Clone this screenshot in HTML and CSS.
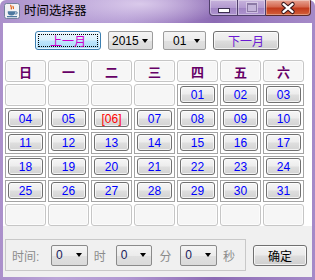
FILE: index.html
```html
<!DOCTYPE html>
<html lang="zh">
<head>
    <meta charset="UTF-8">
    <title>时间选择器</title>
    <link rel="stylesheet" href="styles.css">
</head>
<body>
    <div class="window">
        <div class="titlebar">
            <svg class="app-icon" viewBox="0 0 16 16">
                <rect x="0.5" y="0.5" width="15" height="15" rx="2" fill="#f2f2f4" stroke="#73819c"/>
                <path d="M7 1.8c-1.2 1.6 1.6 2.6 0 4.6M9.2 2.8c-.9 1 1.1 1.8 0 3.2" stroke="#e25d10" fill="none" stroke-width="1.2"/>
                <path d="M3.8 8.2h7.4v1.6c0 1.7-1.5 2.6-3.7 2.6S3.8 11.5 3.8 9.8z" fill="#4f7aa0"/>
                <path d="M11.2 8.8h.9a1.1 1.1 0 0 1 0 2.2h-1" stroke="#4f7aa0" fill="none"/>
                <path d="M3 13.6h10" stroke="#4f7aa0" stroke-width="1.2"/>
            </svg>
            <span class="title">时间选择器</span>
            <div class="caption-btns">
                <div class="cap min"><span></span></div>
                <div class="cap max"><span></span></div>
                <div class="cap close">
                    <svg viewBox="-22 -8 44 16" width="44" height="16">
                        <path d="M-4.5 -3.8L4.5 3.8M4.5 -3.8L-4.5 3.8" stroke="#3b1a1e" stroke-width="4.4" stroke-linecap="round"/>
                        <path d="M-4.5 -3.8L4.5 3.8M4.5 -3.8L-4.5 3.8" stroke="#fff" stroke-width="2.4" stroke-linecap="round"/>
                    </svg>
                </div>
            </div>
        </div>

        <div class="client">
            <div class="nav">
                <button class="btn focus prev"><span>上一月</span></button>
                <div class="combo year">2015<i class="arrow"></i></div>
                <div class="combo month">01<i class="arrow"></i></div>
                <button class="btn next">下一月</button>
            </div>

            <div class="grid" id="grid"></div>

            <div class="footer">
                <div class="time-panel">
                    <span class="label">时间:</span>
                    <div class="combo small">0<i class="arrow"></i></div>
                    <span class="unit u1">时</span>
                    <div class="combo small">0<i class="arrow"></i></div>
                    <span class="unit u2">分</span>
                    <div class="combo small">0<i class="arrow"></i></div>
                    <span class="unit u3">秒</span>
                </div>
                <button class="btn ok">确定</button>
            </div>
        </div>
    </div>

    <script>
        const heads = ['日', '一', '二', '三', '四', '五', '六'];
        const year = 2015, month = 0, today = 6;
        const grid = document.getElementById('grid');

        heads.forEach(h => {
            const div = document.createElement('div');
            div.className = 'cell head';
            div.textContent = h;
            grid.appendChild(div);
        });

        const start = new Date(year, month, 1).getDay();
        const days = new Date(year, month + 1, 0).getDate();

        for (let i = 0; i < 42; i++) {
            const d = i - start + 1;
            const div = document.createElement('div');
            if (d < 1 || d > days) {
                div.className = 'cell';
            } else {
                const label = String(d).padStart(2, '0');
                div.className = d === today ? 'cell day today' : 'cell day';
                div.innerHTML = `<span>${d === today ? '[' + label + ']' : label}</span>`;
            }
            grid.appendChild(div);
        }
    </script>
</body>
</html>
```

FILE: styles.css
```css
body {
    margin: 0;
    font-family: "Liberation Sans", "Noto Sans CJK SC", sans-serif;
    font-size: 12px;
}
.window {
    width: 315px;
    height: 280px;
    display: flex;
    flex-direction: column;
    border-radius: 6px 6px 0 0;
    overflow: hidden;
    background:
        radial-gradient(ellipse 90px 22px at 140px 4px, rgba(226, 212, 240, 0.85), transparent),
        linear-gradient(90deg, #ab90cb 0%, #bba5d8 18%, #b198d2 40%, #9a7bbf 58%, #8c6bb4 68%, #9b7dc0 85%, #a58ac8 100%);
}
.titlebar {
    height: 23px;
    display: flex;
    align-items: flex-start;
    flex-shrink: 0;
}
.app-icon {
    width: 16px;
    height: 16px;
    margin: 3px 0 0 4px;
}
.title {
    margin: 3px 0 0 4px;
    font-size: 12.5px;
    line-height: 17px;
    color: #000;
}
.caption-btns {
    margin-left: auto;
    margin-right: 4px;
    display: flex;
    height: 16px;
}
.cap {
    box-sizing: border-box;
    height: 16px;
    border: 1px solid #4f3f6a;
    border-top: none;
    display: flex;
    align-items: center;
    justify-content: center;
    background: linear-gradient(#c7b3dc, #b39ad0 50%, #9f83c2 51%, #ad93ce);
    box-shadow: inset 0 0 0 1px rgba(255, 255, 255, 0.35);
}
.min {
    width: 29px;
    border-radius: 0 0 0 4px;
}
.min span {
    width: 10px;
    height: 3px;
    margin-top: 5px;
    background: #fff;
    border: 1px solid #3c3050;
}
.max {
    width: 28px;
    border-left: none;
}
.max span {
    width: 8px;
    height: 6px;
    border: 1px solid #8c7aa6;
    border-top-width: 2px;
    background: #c4b4da;
    box-shadow: 0 0 0 1px rgba(230, 220, 240, 0.6);
}
.close {
    width: 45px;
    border-left: none;
    border-radius: 0 0 4px 0;
    border-color: #5a2a2a;
    background: linear-gradient(#e7a595, #d5684f 45%, #c23a1c 55%, #d2603a);
}
.client {
    flex: 1;
    margin: 0 3px 3px 3px;
    background: #fff;
    display: flex;
    flex-direction: column;
}
.nav {
    display: flex;
    padding: 8px 0 0 32px;
    height: 19px;
}
.btn {
    box-sizing: border-box;
    height: 19px;
    padding: 0;
    border: 1px solid #707070;
    border-radius: 3px;
    font-family: "Liberation Sans", "Noto Sans CJK SC", sans-serif;
    font-size: 12px;
    background: linear-gradient(#f3f3f3, #ebebeb 48%, #dddddd 52%, #cfcfcf);
    box-shadow: inset 0 0 0 1px rgba(255, 255, 255, 0.7);
}
.prev {
    width: 66px;
    color: #cc00cc;
    border-color: #3c7fb1;
    background: linear-gradient(#eaf6fd, #d9f0fc 48%, #bee6fd 52%, #a7d9f5);
    display: flex;
    padding: 2px;
}
.prev span {
    flex: 1;
    border: 1px dotted #000;
    display: flex;
    align-items: center;
    justify-content: center;
}
.next {
    width: 66px;
    margin-left: 7px;
    color: #6a1ad2;
}
.combo {
    box-sizing: border-box;
    height: 19px;
    display: flex;
    align-items: center;
    border: 1px solid #9c9c9c;
    border-radius: 2px;
    background: linear-gradient(#f4f4f4, #ececec 50%, #e0e0e0 51%, #dadada);
    color: #000;
}
.arrow {
    margin-left: auto;
    width: 0;
    height: 0;
    border-left: 3.5px solid transparent;
    border-right: 3.5px solid transparent;
    border-top: 4px solid #000;
}
.year {
    width: 45px;
    margin-left: 7px;
    padding: 0 4px 0 3px;
}
.month {
    width: 43px;
    margin-left: 10px;
    padding: 0 5px 0 9px;
}
.grid {
    display: grid;
    grid-template-columns: repeat(7, 41px);
    grid-auto-rows: 22px;
    gap: 2px;
    margin: 10px 0 0 2px;
}
.cell {
    box-sizing: border-box;
    border: 1px solid #c6c6c6;
    border-radius: 3px;
    background: #f6f6f6;
    display: flex;
    align-items: center;
    justify-content: center;
    box-shadow: inset 0 0 0 1px #fcfcfc;
}
.head {
    color: #660066;
    font-weight: bold;
    font-size: 13px;
}
.day {
    border-radius: 0;
    border-color: #a4a4a4;
    background: #fff;
    padding: 1px 2px 2px;
    box-shadow: none;
}
.day span {
    flex: 1;
    align-self: stretch;
    border: 1px solid #707070;
    border-radius: 3px;
    background: linear-gradient(#f6f6f6, #ededed 45%, #dedede 55%, #d3d3d3);
    box-shadow: inset 0 0 0 1px rgba(255, 255, 255, 0.7);
    color: #0000ff;
    display: flex;
    align-items: center;
    justify-content: center;
}
.today span {
    color: #ff0000;
}
.footer {
    flex: 1;
    background: #f0f0f0;
    display: flex;
    align-items: flex-start;
    padding: 13px 0 0 2px;
}
.time-panel {
    box-sizing: border-box;
    width: 241px;
    height: 32px;
    border: 1px solid #c8c8c8;
    display: flex;
    align-items: center;
    padding-left: 6px;
    color: #8c8c8c;
}
.label {
    width: 41px;
}
.small {
    width: 38px;
    height: 21px;
    padding: 0 5px 0 4px;
    border-color: #8a8a8a;
    color: #1a1a5a;
}
.unit {
    margin-left: 6px;
    width: 23px;
}
.u2 {
    margin-left: 7px;
    width: 22px;
}
.ok {
    width: 54px;
    height: 21px;
    margin: 6px 0 0 7px;
    color: #000;
}
```
